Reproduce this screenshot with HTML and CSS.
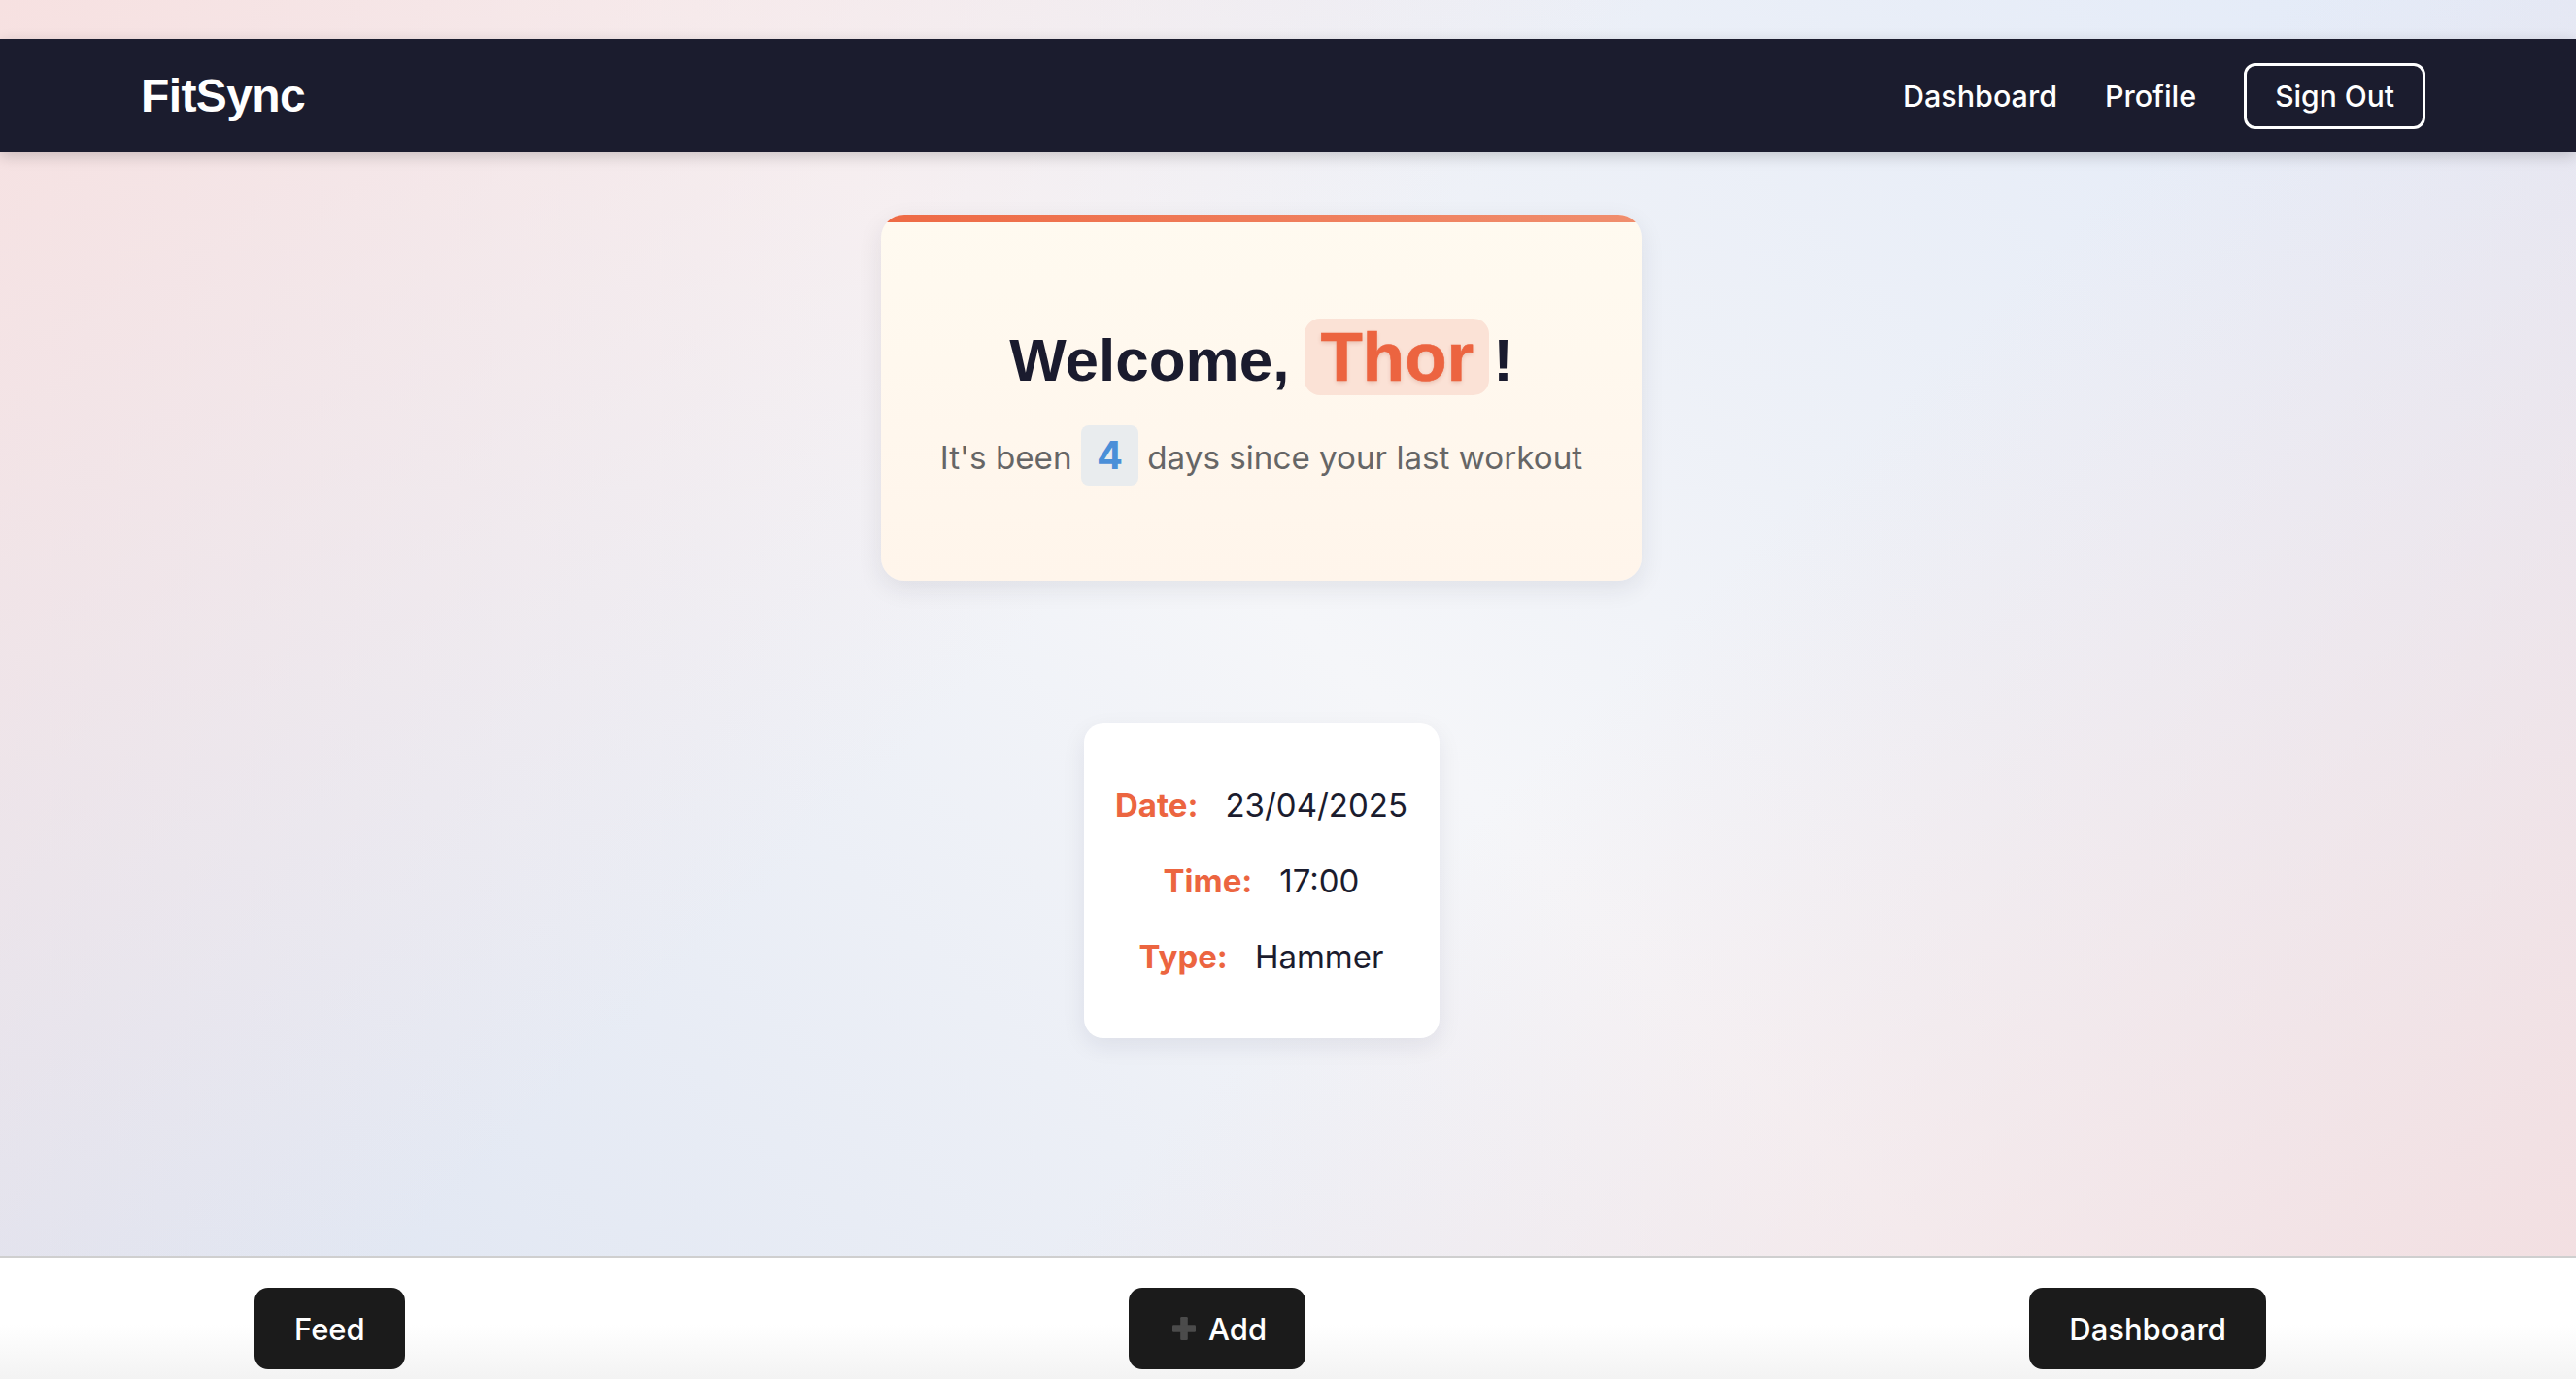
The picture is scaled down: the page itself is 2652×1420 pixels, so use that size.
FILE: index.html
```html
<!DOCTYPE html>
<html lang="en">
<head>
<meta charset="utf-8">
<title>FitSync</title>
<link rel="stylesheet" href="styles.css">
</head>
<body>
  <nav class="navbar">
    <div class="brand">FitSync</div>
    <div class="nav-links">
      <a class="nav-link" href="#">Dashboard</a>
      <a class="nav-link" href="#">Profile</a>
      <button class="signout" type="button">Sign Out</button>
    </div>
  </nav>

  <main class="main">
    <section class="welcome-card">
      <h1 class="welcome-title"><span class="greet">Welcome,</span><span class="name">Thor</span><span class="bang">!</span></h1>
      <p class="subtitle">It's been <span class="days">4</span> days since your last workout</p>
    </section>

    <section class="workout-card">
      <div class="row"><span class="label">Date:</span><span class="value">23/04/2025</span></div>
      <div class="row"><span class="label">Time:</span><span class="value">17:00</span></div>
      <div class="row"><span class="label">Type:</span><span class="value">Hammer</span></div>
    </section>
  </main>

  <footer class="bottom-bar">
    <a class="btn" href="#">Feed</a>
    <a class="btn btn-add" href="#"><svg class="plus" viewBox="0 0 24 24" width="24" height="24" aria-hidden="true"><rect x="8.2" y="0" width="7.6" height="24" rx="1.2"/><rect x="0" y="8.2" width="24" height="7.6" rx="1.2"/></svg>Add</a>
    <a class="btn" href="#">Dashboard</a>
  </footer>
</body>
</html>
```

FILE: styles.css
```css
html, body {
  margin: 0;
  padding: 0;
}

body {
  min-height: 100vh;
  display: flex;
  flex-direction: column;
  font-family: Inter, "Noto Sans", sans-serif;
  color: #1b1c2e;
  background:
    linear-gradient(135deg, rgba(247, 225, 225, 1) 0%, rgba(247, 225, 225, 0) 42%, rgba(243, 222, 224, 0) 58%, rgba(243, 222, 224, 1) 100%),
    linear-gradient(45deg, rgba(220, 227, 241, 1) 0%, rgba(220, 227, 241, 0.35) 35%, rgba(226, 233, 246, 0) 52%, rgba(224, 231, 244, 0.35) 68%, rgba(226, 234, 248, 1) 100%),
    #f5f6f9;
}

/* ---------- Top navigation ---------- */
.navbar {
  position: relative;
  z-index: 2;
  margin-top: 40px;
  height: 117px;
  box-sizing: border-box;
  padding: 0 155px 0 145px;
  display: flex;
  align-items: center;
  justify-content: space-between;
  background: #1b1c2e;
  box-shadow: 0 4px 14px rgba(0, 0, 0, 0.18);
}

.brand {
  font-family: "Liberation Sans", Arial, sans-serif;
  font-weight: 700;
  font-size: 48px;
  letter-spacing: -0.6px;
  color: #ffffff;
}

.nav-links {
  display: flex;
  align-items: center;
  gap: 49px;
}

.nav-link {
  color: #ffffff;
  text-decoration: none;
  font-size: 30.5px;
  font-weight: 500;
}

.signout {
  height: 68px;
  box-sizing: border-box;
  padding: 0 29px;
  border: 3px solid #ffffff;
  border-radius: 12px;
  background: transparent;
  color: #ffffff;
  font-family: Inter, "Noto Sans", sans-serif;
  font-size: 30px;
  font-weight: 500;
}

/* ---------- Main ---------- */
.main {
  flex: 1;
  display: flex;
  flex-direction: column;
  align-items: center;
  padding: 64px 55px 0 0;
}

.welcome-card {
  width: 783px;
  box-sizing: border-box;
  border-radius: 24px;
  overflow: hidden;
  padding: 0 0 98px;
  text-align: center;
  background: linear-gradient(180deg, #fffaf0 0%, #fff5eb 100%);
  box-shadow: 0 8px 26px rgba(30, 30, 60, 0.09);
}

.welcome-card::before {
  content: "";
  display: block;
  height: 8px;
  margin-bottom: 99px;
  background: linear-gradient(90deg, #ee6a45 0%, #f08e6e 100%);
}

.welcome-title {
  margin: 0;
  display: flex;
  justify-content: center;
  align-items: baseline;
  font-family: "Liberation Sans", Arial, sans-serif;
  font-weight: 700;
  font-size: 62px;
  line-height: 1;
  color: #1a1b2e;
}

.name {
  margin: 0 4px 0 16px;
  padding: 4px 16px;
  font-size: 71px;
  font-weight: 700;
  line-height: 1;
  border-radius: 16px;
  background: #fbe2d6;
  color: #ec6440;
  -webkit-text-stroke: 0.6px #ec6440;
  text-shadow: 0 2px 4px rgba(170, 70, 40, 0.22);
}

.subtitle {
  margin: 31px 0 0;
  font-size: 33.2px;
  color: #666666;
}

.days {
  display: inline-block;
  padding: 0 16px;
  line-height: 62px;
  font-size: 40px;
  font-weight: 700;
  color: #4a8fd8;
  background: #e9ecee;
  border-radius: 8px;
}

.workout-card {
  margin-top: 147px;
  width: 366px;
  box-sizing: border-box;
  padding: 59px 20px;
  display: flex;
  flex-direction: column;
  gap: 28px;
  background: #ffffff;
  border-radius: 20px;
  box-shadow: 0 8px 24px rgba(30, 30, 60, 0.08);
}

.row {
  display: flex;
  justify-content: center;
  gap: 28px;
  font-size: 33px;
  line-height: 50px;
}

.label {
  font-weight: 700;
  color: #ec6540;
}

.value {
  color: #1b1c2e;
}

/* ---------- Bottom bar ---------- */
.bottom-bar {
  height: 127px;
  box-sizing: border-box;
  border-top: 2px solid #cfcfcf;
  padding: 31px 319px 0 262px;
  display: flex;
  justify-content: space-between;
  align-items: flex-start;
  background: linear-gradient(180deg, #ffffff 55%, #f3f3f3 100%);
}

.btn {
  height: 84px;
  box-sizing: border-box;
  padding: 0 41px;
  display: inline-flex;
  align-items: center;
  gap: 13px;
  border-radius: 14px;
  background: #1b1b1b;
  color: #ffffff;
  text-decoration: none;
  font-size: 31px;
  font-weight: 500;
}

.btn-add {
  padding: 0 40px 0 45px;
}

.plus {
  fill: #4b4b4b;
  flex: none;
}
```
